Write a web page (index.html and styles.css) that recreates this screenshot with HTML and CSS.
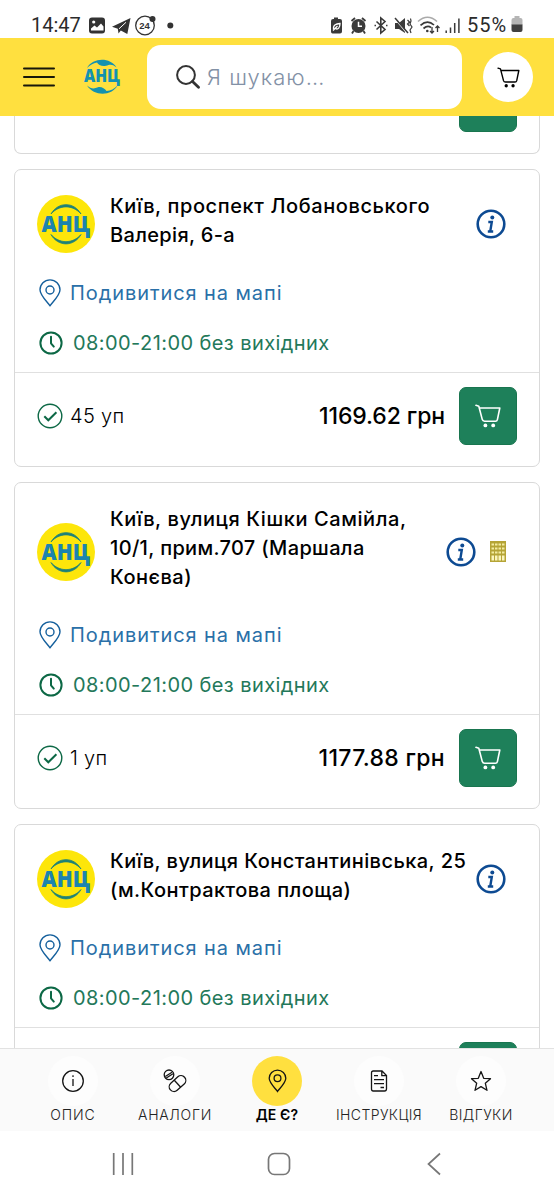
FILE: index.html
```html
<!DOCTYPE html>
<html lang="uk">
<head>
<meta charset="utf-8">
<meta name="viewport" content="width=device-width">
<title>АНЦ — Де є?</title>
<link rel="stylesheet" href="styles.css">
</head>
<body>
<svg class="defs" aria-hidden="true">
  <symbol id="cart" viewBox="0 0 26 24"><path d="M1 1.3 3.8 2.2 7.3 15.6Q7.8 17.2 9.5 17.2H20.5Q22 17.2 22.4 15.6L24.8 4H4.4" fill="none" stroke="currentColor" stroke-width="1.6" stroke-linejoin="round" stroke-linecap="round"/><circle cx="10.4" cy="21.4" r="1.9" fill="currentColor"/><circle cx="18.2" cy="21.4" r="1.9" fill="currentColor"/></symbol>
  <symbol id="pin" viewBox="0 0 22 28"><path d="M11 26.8C8.5 23 1 16.500 1 10.800a10 9.900 0 0 1 20 0C21 16.500 13.500 23 11 26.800Z" fill="none" stroke="currentColor" stroke-width="1.400" stroke-linejoin="round"/><circle cx="11" cy="11" r="4" fill="none" stroke="currentColor" stroke-width="1.400"/></symbol>
  <symbol id="clock" viewBox="0 0 24 24"><circle cx="12" cy="12" r="10.600" fill="none" stroke="currentColor" stroke-width="2"/><path d="M12 5.800V12.300L14.800 15.600" fill="none" stroke="currentColor" stroke-width="2" stroke-linecap="round" stroke-linejoin="round"/></symbol>
  <symbol id="check" viewBox="0 0 26 26"><circle cx="13" cy="13" r="11.800" fill="none" stroke="currentColor" stroke-width="1.400"/><path d="M7.300 13.200 11.300 17.300 19.400 9.300" fill="none" stroke="currentColor" stroke-width="2"/></symbol>
  <symbol id="info" viewBox="0 0 30 30"><circle cx="15" cy="15" r="13.300" fill="none" stroke="currentColor" stroke-width="2.600"/><circle cx="16.300" cy="8.600" r="2" fill="currentColor"/><path d="M12.300 13H15.800L14.300 22M11.800 22.500H17.200" fill="none" stroke="currentColor" stroke-width="2.400"/></symbol>
  <symbol id="brand" viewBox="0 0 58 58"><circle cx="29" cy="29" r="29" fill="#fde60a"/><path d="M14 19C21 6.500 37 6.500 44 19 36 9.500 22 9.500 14 19ZM14 39.500C21 52 37 52 44 39.500 36 49 22 49 14 39.500Z" fill="#1d8177" stroke="#1d8177" stroke-width=".8"/></symbol>
  <symbol id="building" viewBox="0 0 16 21"><path d="M0 0H16V21H0Z" fill="#b5a436"/><path d="M1.500 3.500H14.500M1.500 7.500H14.500M1.500 11.500H14.500" stroke="#f3eba0" stroke-width="2" stroke-dasharray="2.500 1"/><path d="M1.500 17H14.500" stroke="#fbf5bd" stroke-width="5" stroke-dasharray="2.500 1"/></symbol>
</svg>
<div class="screen">
  <div class="status">
    <span class="time">14:47</span>
    <svg class="status-left" width="90" height="24" viewBox="0 0 90 24">
      <rect x="1" y="4.500" width="16" height="16" rx="3" fill="#333"/><circle cx="5.700" cy="9" r="1.600" fill="#fff"/><path d="M3 17.500V15.500L6.500 12.500 9 14.500 13 10.500 15.500 13.500V17.500Z" fill="#fff"/>
      <path d="M24 13.700 42.500 5 39.300 21 32.800 17.400 30.500 20.500 29.800 15.800Z" fill="#333"/><path d="M31 15.800 38 9.300" stroke="#fff"/>
      <circle cx="57" cy="12.500" r="9.300" fill="none" stroke="#333" stroke-width="1.300"/><circle cx="64.500" cy="6" r="3" fill="#333"/><text x="51.300" y="15.700" class="badge-num">24</text>
      <circle cx="82.300" cy="12.500" r="3" fill="#333"/>
    </svg>
    <svg class="status-right" width="134" height="24" viewBox="0 0 134 24">
      <g fill="#3a3a3a"><path d="M4 4.500H8V6H10Q12 6 12 8V18.500Q12 20.500 10 20.500H2.500Q1 20.500 1 18.500V8Q1 6 3 6H4Z"/><circle cx="28.500" cy="13" r="7"/><path d="M23.500 18 22 20.500M33.500 18 35 20.500M21.500 8 25 5M35.500 8 32 5" stroke="#3a3a3a" stroke-width="1.800"/><path d="M65 10H69L75 5V20L69 16H65Z"/></g>
      <path d="M3.500 16C3 11.500 6.500 11 10 10.500 10 14.500 8 17 5.500 15.500M3 17.500 7.500 13" fill="none" stroke="#fff" stroke-width="1.300"/>
      <path d="M28.500 8.800V13.300H32" fill="none" stroke="#fff" stroke-width="1.500"/>
      <path d="M46.500 8.500 55 16.500 50.800 20V5L55 8.500 46.500 16.500M44.500 12.500H46M56 12.500H57.500" fill="none" stroke="#3a3a3a" stroke-width="1.600"/>
      <path d="M64.500 5 77 20" stroke="#fff" stroke-width="1.500"/><path d="M65 5 78 20" stroke="#3a3a3a" stroke-width="1.500"/><path d="M77.500 7 79.500 9 77.500 11 79.500 13M80.500 5.500 81 8 80 11 82 14 80 17 81 20" fill="none" stroke="#3a3a3a" stroke-width="1.200"/>
      <path d="M88 8.500Q97.500 0 107 8.500" fill="none" stroke="#aaa" stroke-width="1.600"/><path d="M90.500 12.300Q97.500 6 104 12M93.500 15.500Q97.500 12 101 14.500" fill="none" stroke="#3a3a3a" stroke-width="1.700"/><circle cx="97.300" cy="18" r="1.300" fill="#3a3a3a"/><path d="M102 14V20M100 18 102 20 104 18M107.500 19V13M105.500 15 107.500 13 109.500 15" fill="none" stroke="#3a3a3a" stroke-width="1.300"/>
      <path d="M116.200 17.500V20M120.500 14.500V20M124.700 10V20M128.900 5.500V20" stroke="#3a3a3a" stroke-width="1.500"/>
    </svg>
    <span class="percent">55%</span>
    <svg class="battery" width="12" height="17" viewBox="0 0 12 17"><path d="M3.500 0H8.500V2H9.500Q11.500 2 11.500 4V9H.5V4Q.5 2 2.500 2H3.500Z" fill="#b5b5b5"/><path d="M.5 8.500H11.500V14Q11.500 16 9.500 16H2.500Q.5 16 .5 14Z" fill="#404040"/></svg>
  </div>

  <header class="header">
    <svg class="menu" width="32" height="20" viewBox="0 0 32 20"><path d="M1 1.500H31M1 10H31M1 18.500H31" stroke="#17170a" stroke-width="2" stroke-linecap="round"/></svg>
    <svg class="logo" width="38" height="36" viewBox="0 0 38 36"><path d="M4 9C10-1.500 27-2 33.500 8.500 29 4.800 27 5.500 23 6.800 19 8 15 5.500 14 3.500 10 4.500 7 6 4 9Z" fill="#1492b0"/><path d="M34.500 26.500C28.500 37.500 11 37.500 4 26.500 8 30 11 30 15 28.300 18 27.500 22 29.500 23.500 32 28 31.500 31 30 34.500 26.500Z" fill="#1492b0"/><text x="1" y="23.200" class="logo-name" textLength="36" lengthAdjust="spacingAndGlyphs">АНЦ</text></svg>
    <div class="search">
      <svg width="24" height="24" viewBox="0 0 24 24"><circle cx="10" cy="10" r="8.900" fill="none" stroke="#333" stroke-width="2"/><path d="M16.500 16.500 22.500 22.300" stroke="#333" stroke-width="2.800" stroke-linecap="round"/></svg>
      <span>Я шукаю…</span>
    </div>
    <div class="basket"><svg width="23" height="21"><use href="#cart"/></svg></div>
  </header>

  <main class="list">
    <section class="card card-cut"><div class="buy"></div></section>

    <section class="card">
      <div class="head">
        <svg class="brand" width="58" height="58"><use href="#brand"/><text x="4.500" y="37.200" class="brand-name" textLength="48.500" lengthAdjust="spacingAndGlyphs">АНЦ</text></svg>
        <div class="address"><span class="t-wide">Київ, проспект Лобановського</span><br><span class="t-tight">Валерія, 6-а</span></div>
        <svg class="info" width="30" height="30"><use href="#info"/></svg>
      </div>
      <div class="row map"><svg width="22" height="28"><use href="#pin"/></svg><span>Подивитися на мапі</span></div>
      <div class="row hours"><svg width="24" height="24"><use href="#clock"/></svg><span>08:00-21:00 без вихідних</span></div>
      <div class="foot">
        <svg width="26" height="26"><use href="#check"/></svg><span class="stock">45 уп</span>
        <span class="price">1169.62 грн</span>
        <div class="buy"><svg width="26" height="24"><use href="#cart"/></svg></div>
      </div>
    </section>

    <section class="card">
      <div class="head">
        <svg class="brand" width="58" height="58"><use href="#brand"/><text x="4.500" y="37.200" class="brand-name" textLength="48.500" lengthAdjust="spacingAndGlyphs">АНЦ</text></svg>
        <div class="address"><span class="t-wide">Київ, вулиця Кішки Самійла,</span><br><span class="t-tight">10/1, прим.707 (Маршала</span><br><span>Конєва)</span></div>
        <svg class="info" width="30" height="30"><use href="#info"/></svg>
        <svg class="building" width="16" height="21"><use href="#building"/></svg>
      </div>
      <div class="row map"><svg width="22" height="28"><use href="#pin"/></svg><span>Подивитися на мапі</span></div>
      <div class="row hours"><svg width="24" height="24"><use href="#clock"/></svg><span>08:00-21:00 без вихідних</span></div>
      <div class="foot">
        <svg width="26" height="26"><use href="#check"/></svg><span class="stock">1 уп</span>
        <span class="price price-wide">1177.88 грн</span>
        <div class="buy"><svg width="26" height="24"><use href="#cart"/></svg></div>
      </div>
    </section>

    <section class="card">
      <div class="head">
        <svg class="brand" width="58" height="58"><use href="#brand"/><text x="4.500" y="37.200" class="brand-name" textLength="48.500" lengthAdjust="spacingAndGlyphs">АНЦ</text></svg>
        <div class="address"><span class="t-long">Київ, вулиця Константинівська, 25</span><br><span class="t-long">(м.Контрактова площа)</span></div>
        <svg class="info" width="30" height="30"><use href="#info"/></svg>
      </div>
      <div class="row map"><svg width="22" height="28"><use href="#pin"/></svg><span>Подивитися на мапі</span></div>
      <div class="row hours"><svg width="24" height="24"><use href="#clock"/></svg><span>08:00-21:00 без вихідних</span></div>
      <div class="foot"><div class="buy"></div></div>
    </section>
  </main>

  <nav class="tabs">
    <div class="tab"><i><svg width="24" height="24" viewBox="0 0 24 24"><circle cx="12" cy="12" r="10.300"/><path d="M12 10V17M12 6.300V8"/></svg></i><span class="s-opys">ОПИС</span></div>
    <div class="tab"><i><svg width="24" height="24" viewBox="0 0 24 24"><circle cx="6" cy="5.800" r="4.800"/><path d="M2.300 7.500 9 3.200M3.300 9 10 4.700"/><rect x="5" y="9.800" width="19" height="9.500" rx="4.750" transform="rotate(-42 14.500 14.550)"/><path d="M11.300 11.200 17.700 18.200"/></svg></i><span class="s-anal">АНАЛОГИ</span></div>
    <div class="tab active"><i><svg width="19" height="24" viewBox="0 0 19 24"><path d="M9.500 22.500C7.500 19.500 1.200 14 1.200 9.300a8.300 8.200 0 0 1 16.600 0C17.800 14 11.500 19.500 9.500 22.500Z"/><circle cx="9.500" cy="9.300" r="3.400"/></svg></i><span>ДЕ Є?</span></div>
    <div class="tab"><i><svg width="18" height="22" viewBox="0 0 18 22"><path d="M3.200 1H12L16.500 5.500V18.800Q16.500 21 14.500 21H3.200Q1.500 21 1.500 19V3Q1.500 1 3.200 1ZM11.800 1V5.700H16.500M4 5.700H8M4 9.700H14M4 13.700H14M10.500 17.500H14"/></svg></i><span>ІНСТРУКЦІЯ</span></div>
    <div class="tab"><i><svg width="22" height="22" viewBox="0 0 22 22"><path d="M11 1.500 13.700 8.300 20.500 8.700 15.300 13.200 17 20.300 11 16.600 5 20.300 6.700 13.200 1.500 8.700 8.300 8.300Z" stroke-linejoin="round"/></svg></i><span>ВІДГУКИ</span></div>
  </nav>

  <div class="sysnav">
    <svg width="24" height="24" viewBox="0 0 24 24"><path d="M2.700 1V23M12 1V23M21.300 1V23"/></svg>
    <svg width="24" height="24" viewBox="0 0 24 24"><rect x="1.500" y="1.500" width="21" height="21" rx="6"/></svg>
    <svg width="24" height="24" viewBox="0 0 24 24"><path d="M18 1.500 6.500 12 18 22.500"/></svg>
  </div>
</div>
</body>
</html>
```
FILE: styles.css
```css
* { box-sizing: border-box; }
body { margin: 0; background: #fff; color: #000; font-family: Inter, "Open Sans", sans-serif; }
svg { flex: none; display: block; }
.defs { position: absolute; width: 0; height: 0; }
.screen { display: flex; flex-direction: column; width: 554px; height: 1200px; overflow: hidden; }

.status { height: 38px; display: flex; align-items: center; padding: 11px 0 0 31px; font: 400 20px/24px Roboto, sans-serif; color: #2b2b2b; }
.time { width: 57px; }
.percent { width: 45px; margin-left: 3px; margin-right: -1px; letter-spacing: 1px; }
.status-left { margin-right: 152px; }
.badge-num { font: 700 9.500px "Liberation Sans", sans-serif; fill: #333; }

.header { height: 78px; background: #ffe03f; display: flex; align-items: center; padding-left: 23px; }
.logo { margin-left: 28px; }
.logo-name { font: 900 17px "Open Sans", sans-serif; font-weight: 800; fill: #1492b0; }
.brand-name { font: 800 22.500px "Open Sans", sans-serif; fill: #1c84ae; }
.search { width: 315px; height: 64px; margin-left: 26px; border-radius: 14px; background: #fff; display: flex; align-items: center; gap: 7px; padding-left: 29px; font-size: 22px; font-weight: 300; color: #8391a6; letter-spacing: 1px; }
.basket { width: 50px; height: 50px; margin-left: 21px; border-radius: 50%; background: #fff; display: flex; align-items: center; justify-content: center; }

.list { flex: 1; min-height: 0; overflow: hidden; padding: 0 14px; display: flex; flex-direction: column; gap: 15px; }
.card { flex: none; border: 1px solid #d9d9d9; border-radius: 7px; padding-top: 25px; }
.card-cut { height: 38px; border-top: 0; border-radius: 0 0 7px 7px; padding: 0 22px 0 0; overflow: hidden; display: flex; justify-content: flex-end; }
.card-cut .buy { height: 58px; margin-top: -42px; }
.head { display: flex; align-items: center; padding: 0 33px 0 22px; }
.address { flex: 1; margin-left: 15px; margin-top: -3px; margin-bottom: 3px; font-size: 20px; line-height: 29px; font-weight: 500; letter-spacing: .49px; white-space: nowrap; }
.t-wide { letter-spacing: .59px; }
.t-tight { letter-spacing: .34px; }
.t-long { letter-spacing: .44px; }
.building { margin: 0 0 0 14px; }
.info { color: #0d4a92; }
.row { display: flex; align-items: center; font-size: 20px; font-weight: 400; }
.map { height: 52px; margin-top: 13px; padding: 1px 0 0 24px; gap: 9px; color: #2a70a8; letter-spacing: .92px; }
.hours { height: 50px; padding-left: 24px; gap: 10px; color: #23785a; letter-spacing: .42px; }
.map svg { color: #145f9c; }
.hours svg { color: #0c6845; }
.foot { height: 94px; margin-top: 4px; border-top: 1px solid #e0e0e0; display: flex; align-items: center; padding: 0 22px 7px; font-size: 20px; font-weight: 300; }
.foot > svg { color: #0c6845; }
.stock { margin-left: 7px; letter-spacing: .3px; }
.price { margin-left: auto; font-size: 23px; font-weight: 500; letter-spacing: -.1px; }
.price-wide { letter-spacing: .32px; }
.buy { width: 58px; height: 58px; margin-left: 14px; border: 1px solid #19754f; border-radius: 7px; background: #1e805a; color: #fff; display: flex; align-items: center; justify-content: center; }
.foot > .buy:only-child { margin-left: auto; }

.tabs { height: 83px; flex: none; border-top: 1px solid #e2e2e2; background: #fafafa; display: flex; padding: 7px 22px 0; }
.tab { width: 102px; flex: none; display: flex; flex-direction: column; align-items: center; font-size: 14px; line-height: 18px; letter-spacing: .4px; color: #222; white-space: nowrap; font-weight: 300; }
.tab i { width: 50px; height: 50px; border-radius: 50%; background: #fdfdfd; display: flex; align-items: center; justify-content: center; }
.tab svg { fill: none; stroke: #151515; stroke-width: 1.300; }
.active { font-weight: 600; letter-spacing: .1px; color: #000; }
.active i { background: #ffe03f; }
.s-opys { letter-spacing: .9px; }
.s-anal { letter-spacing: .7px; }

.sysnav { height: 69px; display: flex; align-items: center; padding: 0 108px 3px 111px; justify-content: space-between; }
.sysnav svg { fill: none; stroke: #777; stroke-width: 1.700; }
```
